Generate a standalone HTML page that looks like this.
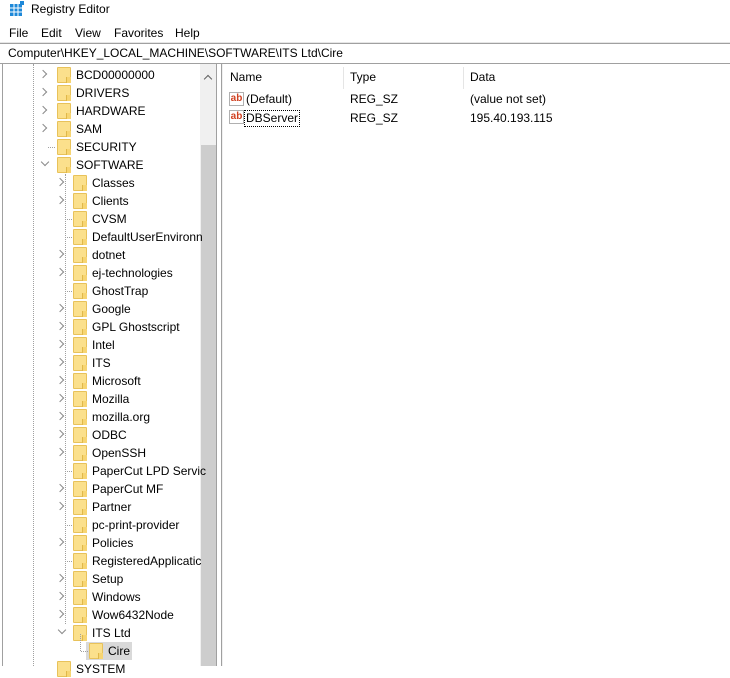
<!DOCTYPE html><html><head><style>
*{margin:0;padding:0;box-sizing:border-box}
body{width:730px;height:666px;background:#fff;font-family:"Liberation Sans",sans-serif;font-size:12px;color:#000;position:relative;overflow:hidden}
.a{position:absolute;white-space:nowrap}
.row{position:absolute;height:18px;line-height:18px}
.fold{position:absolute;width:14px;height:16px;background:#fbe08c;border:1px solid #e8c25a;border-radius:1px}
.fold:after{content:"";position:absolute;right:-1px;bottom:-1px;width:4px;height:6px;border-left:1px solid #e0b84a;background:#f7d572}
.chev{position:absolute;width:6px;height:6px;border-right:1px solid #8a8a8a;border-bottom:1px solid #8a8a8a}
.dv{position:absolute;border-left:1px dotted #a0a0a0}
.dh{position:absolute;border-top:1px dotted #a0a0a0;width:7px}
.ab{position:absolute;width:15px;height:14px;border:1px solid #b0b0b0;background:#fff;color:#d04020;font-weight:bold;font-size:10px;line-height:12px;text-align:center}
</style></head><body>
<svg class="a" style="left:9px;top:1px" width="16" height="16"><rect x="1" y="3" width="12" height="12" fill="#1e88d8"/><g stroke="#fff" stroke-width="1"><line x1="5" y1="3" x2="5" y2="15"/><line x1="9" y1="3" x2="9" y2="15"/><line x1="1" y1="7" x2="13" y2="7"/><line x1="1" y1="11" x2="13" y2="11"/></g><rect x="11" y="0" width="4" height="4" fill="#1e88d8"/></svg>
<div class="a" style="left:31px;top:1px;line-height:16px">Registry Editor</div>
<div class="a" style="left:9px;top:25px;line-height:16px">File</div>
<div class="a" style="left:41px;top:25px;line-height:16px">Edit</div>
<div class="a" style="left:75px;top:25px;line-height:16px">View</div>
<div class="a" style="left:114px;top:25px;line-height:16px">Favorites</div>
<div class="a" style="left:175px;top:25px;line-height:16px">Help</div>
<div class="a" style="left:0;top:42px;width:730px;height:2px;background:#e6e6e6"></div>
<div class="a" style="left:0;top:43px;width:730px;height:1px;background:#a0a0a0"></div>
<div class="a" style="left:8px;top:45px;line-height:17px">Computer\HKEY_LOCAL_MACHINE\SOFTWARE\ITS Ltd\Cire</div>
<div class="a" style="left:0;top:63px;width:730px;height:1px;background:#a0a0a0"></div>
<div class="a" style="left:2px;top:64px;width:1px;height:602px;background:#a0a0a0"></div>
<div class="a" style="left:200px;top:64px;width:16px;height:602px;background:#f0f0f0"></div>
<div class="a" style="left:201px;top:145px;width:15px;height:521px;background:#cdcdcd"></div>
<div class="a" style="left:205px;top:76px;width:6px;height:6px;border-left:1.5px solid #606060;border-top:1.5px solid #606060;transform:rotate(45deg)"></div>
<div class="a" style="left:216px;top:64px;width:1px;height:602px;background:#a0a0a0"></div>
<div class="a" style="left:221px;top:64px;width:1px;height:602px;background:#a0a0a0"></div>
<div class="a" style="left:222px;top:64px;width:1px;height:602px;background:#f0f0f0"></div>
<div class="dv" style="left:33px;top:64px;height:602px"></div>
<div class="dv" style="left:65px;top:174px;height:450px"></div>
<div id="tree"></div>
<div class="a" style="left:343px;top:67px;width:1px;height:22px;background:#e5e5e5"></div>
<div class="a" style="left:463px;top:67px;width:1px;height:22px;background:#e5e5e5"></div>
<div class="a" style="left:230px;top:70px">Name</div>
<div class="a" style="left:350px;top:70px">Type</div>
<div class="a" style="left:470px;top:70px">Data</div>
<div class="ab" style="left:229px;top:92px">ab</div>
<div class="a" style="left:246px;top:92px">(Default)</div>
<div class="a" style="left:350px;top:92px">REG_SZ</div>
<div class="a" style="left:470px;top:92px">(value not set)</div>
<div class="ab" style="left:229px;top:110px">ab</div>
<div class="a" style="left:244px;top:110px;border:1px dotted #000;padding:0 1px;line-height:15px">DBServer</div>
<div class="a" style="left:350px;top:111px">REG_SZ</div>
<div class="a" style="left:470px;top:111px">195.40.193.115</div>
<script>
var L1=[["BCD00000000",1],["DRIVERS",1],["HARDWARE",1],["SAM",1],["SECURITY",0],["SOFTWARE",2]];
var L2=[["Classes",1],["Clients",1],["CVSM",0],["DefaultUserEnvironn",0],["dotnet",1],["ej-technologies",1],["GhostTrap",0],["Google",1],["GPL Ghostscript",1],["Intel",1],["ITS",1],["Microsoft",1],["Mozilla",1],["mozilla.org",1],["ODBC",1],["OpenSSH",1],["PaperCut LPD Servic",0],["PaperCut MF",1],["Partner",1],["pc-print-provider",0],["Policies",1],["RegisteredApplicatic",0],["Setup",1],["Windows",1],["Wow6432Node",1],["ITS Ltd",2]];
var h="",i=0,B=66;
function item(t,e,lvl,y){var ax=[46,63,79][lvl],fx=[57,73,89][lvl],tx=[76,92,108][lvl];
 if(e==1)h+='<div class="chev" style="left:'+(ax-6)+'px;top:'+(y+5)+'px;transform:rotate(-45deg)"></div>';
 else if(e==2)h+='<div class="chev" style="left:'+(ax-4)+'px;top:'+(y+3)+'px;transform:rotate(45deg)"></div>';
 else h+='<div class="dh" style="left:'+(ax+2)+'px;top:'+(y+9)+'px"></div>';
 h+='<div class="fold" style="left:'+fx+'px;top:'+(y+1)+'px"></div><div class="row" style="left:'+tx+'px;top:'+y+'px">'+t+'</div>';}
L1.forEach(function(a){item(a[0],a[1],0,B+18*i);i++});
L2.forEach(function(a){item(a[0],a[1],1,B+18*i);i++});
var y=B+18*i;
h+='<div class="a" style="left:86px;top:'+y+'px;width:46px;height:18px;background:#d9d9d9"></div><div class="dv" style="left:80px;top:'+(y-8)+'px;height:17px"></div>';
item("Cire",0,2,y);
h+='<div class="fold" style="left:57px;top:'+(y+19)+'px"></div><div class="row" style="left:76px;top:'+(y+18)+'px">SYSTEM</div>';
document.getElementById("tree").innerHTML=h;
</script>
</body></html>
